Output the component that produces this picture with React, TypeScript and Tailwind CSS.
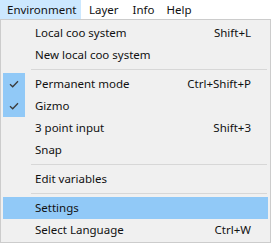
import React from "react";

type Entry =
  | { kind: "item"; label: string; shortcut?: string; checked?: boolean; active?: boolean }
  | { kind: "sep" };

const entries: Entry[] = [
  { kind: "item", label: "Local coo system", shortcut: "Shift+L" },
  { kind: "item", label: "New local coo system" },
  { kind: "sep" },
  { kind: "item", label: "Permanent mode", shortcut: "Ctrl+Shift+P", checked: true },
  { kind: "item", label: "Gizmo", checked: true },
  { kind: "item", label: "3 point input", shortcut: "Shift+3" },
  { kind: "item", label: "Snap" },
  { kind: "sep" },
  { kind: "item", label: "Edit variables" },
  { kind: "sep" },
  { kind: "item", label: "Settings", active: true },
  { kind: "item", label: "Select Language", shortcut: "Ctrl+W" },
];

function Check() {
  return (
    <svg width="10" height="8" viewBox="0 0 10 8" fill="none">
      <path d="M1 4.2 L3.7 6.8 L9 1.2" stroke="#3b3b3b" strokeWidth="1.3" />
    </svg>
  );
}

export default function App() {
  return (
    <div
      className="w-[271px] h-[243px] bg-white text-[11.5px] text-[#111] overflow-hidden"
      style={{ fontFamily: '"Segoe UI", "Noto Sans", sans-serif' }}
    >
      <div className="flex h-[19px] items-center">
        <div className="flex h-[19px] w-[81px] items-center bg-[#cce8ff] pl-[7px]">Environment</div>
        <div className="pl-[8px]">Layer</div>
        <div className="pl-[14px]">Info</div>
        <div className="pl-[12px]">Help</div>
      </div>
      <div className="w-[271px] border border-[#cccccc] bg-[#f0f0f0] px-[2px] pt-[2px] pb-[1px]">
        {entries.map((e, i) =>
          e.kind === "sep" ? (
            <div key={i} className="flex h-[7px] items-center pl-[28px] pr-[1px]">
              <div className="h-px w-full bg-[#d7d7d7]" />
            </div>
          ) : (
            <div
              key={i}
              className={`flex h-[22px] items-center ${e.active ? "bg-[#91c9f7]" : ""}`}
            >
              <div
                className={`flex h-[22px] w-[22px] items-center justify-center ${
                  e.checked ? "bg-[#91c9f7]" : ""
                }`}
              >
                {e.checked && <Check />}
              </div>
              <div className="flex-1 pl-[10px]">{e.label}</div>
              <div className="pr-[17px]">{e.shortcut}</div>
            </div>
          )
        )}
      </div>
    </div>
  );
}
